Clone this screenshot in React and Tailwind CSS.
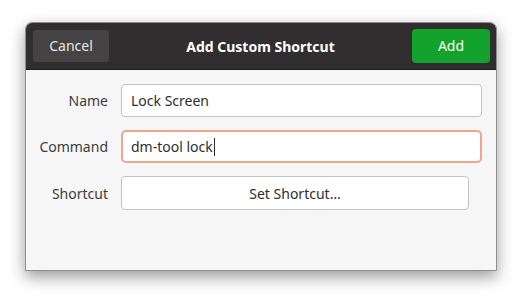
export default function App() {
  const font = { fontFamily: '"Noto Sans", "Open Sans", sans-serif' };

  return (
    <div className="w-[522px] h-[300px] bg-white pt-[22px] pl-[25px]" style={font}>
      <div className="w-[472px] h-[249px] flex flex-col rounded-t-[7px] border border-[#8f8f8f] bg-[#f6f6f6] shadow-[0_6px_16px_rgba(0,0,0,0.4)] overflow-hidden">
        {/* header bar */}
        <div className="h-[47px] shrink-0 bg-[#302e2e] border-b border-[#1f1e1e] flex items-center justify-between pl-[7px] pr-[6px]">
          <button className="w-[76px] h-[32px] rounded-[4px] bg-[#454343] text-[#e6e6e6] text-[14px] leading-none">
            Cancel
          </button>
          <div className="text-white font-bold text-[14px]">Add Custom Shortcut</div>
          <button className="w-[78px] h-[34px] rounded-[4px] bg-[#13a22b] text-white text-[14px] leading-none">
            Add
          </button>
        </div>

        {/* form */}
        <div className="grid grid-cols-[82px_1fr] gap-x-[13px] gap-y-[13px] pt-[14px] pr-[14px] items-center text-[14px] text-[#3c3c3c]">
          <div className="text-right">Name</div>
          <div className="h-[33px] rounded-[4px] border border-[#c4c4c4] bg-white flex items-center px-[9px] text-[#2e2e2e]">
            Lock Screen
          </div>

          <div className="text-right">Command</div>
          <div className="h-[33px] rounded-[5px] border-2 border-[#f2a58c] bg-white flex items-center px-[8px] text-[#2e2e2e]">
            dm-tool lock<span className="w-px h-[18px] bg-[#2e2e2e] ml-px" />
          </div>

          <div className="text-right">Shortcut</div>
          <div className="mr-[13px] h-[34px] rounded-[4px] border border-[#c4c4c4] bg-white flex items-center justify-center text-[#2e2e2e]">
            Set Shortcut…
          </div>
        </div>
      </div>
    </div>
  );
}
